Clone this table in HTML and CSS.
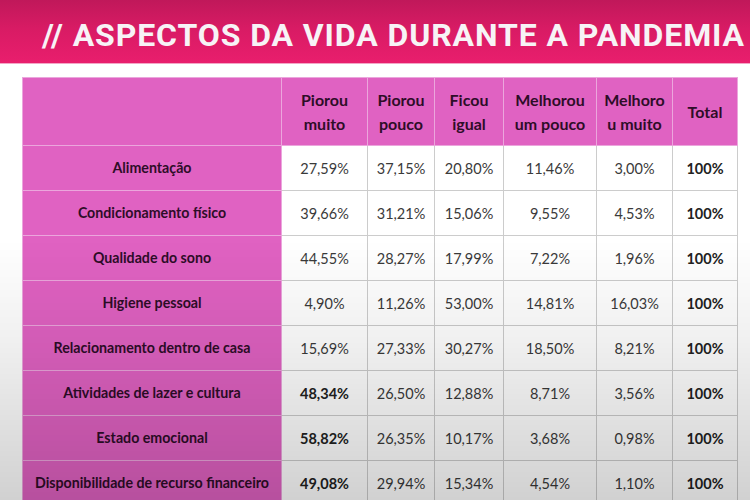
FILE: index.html
```html
<!DOCTYPE html>
<html lang="pt">
<head>
<meta charset="utf-8">
<link rel="stylesheet" href="styles.css">
</head>
<body>
<header class="topbar">
  <h1 class="title">// ASPECTOS DA VIDA DURANTE A PANDEMIA</h1>
</header>
<main class="content">
  <table class="grid">
    <colgroup>
      <col class="c-label"><col class="c1"><col class="c2"><col class="c3"><col class="c4"><col class="c5"><col class="c6">
    </colgroup>
    <thead>
      <tr>
        <th class="pink"></th>
        <th class="pink">Piorou<br>muito</th>
        <th class="pink">Piorou<br>pouco</th>
        <th class="pink">Ficou<br>igual</th>
        <th class="pink">Melhorou<br>um pouco</th>
        <th class="pink">Melhoro<br>u muito</th>
        <th class="pink">Total</th>
      </tr>
    </thead>
    <tbody>
      <tr><th class="pink">Alimentação</th><td>27,59%</td><td>37,15%</td><td>20,80%</td><td>11,46%</td><td>3,00%</td><td class="b">100%</td></tr>
      <tr><th class="pink">Condicionamento físico</th><td>39,66%</td><td>31,21%</td><td>15,06%</td><td>9,55%</td><td>4,53%</td><td class="b">100%</td></tr>
      <tr><th class="pink">Qualidade do sono</th><td>44,55%</td><td>28,27%</td><td>17,99%</td><td>7,22%</td><td>1,96%</td><td class="b">100%</td></tr>
      <tr><th class="pink">Higiene pessoal</th><td>4,90%</td><td>11,26%</td><td>53,00%</td><td>14,81%</td><td>16,03%</td><td class="b">100%</td></tr>
      <tr><th class="pink">Relacionamento dentro de casa</th><td>15,69%</td><td>27,33%</td><td>30,27%</td><td>18,50%</td><td>8,21%</td><td class="b">100%</td></tr>
      <tr><th class="pink">Atividades de lazer e cultura</th><td class="b">48,34%</td><td>26,50%</td><td>12,88%</td><td>8,71%</td><td>3,56%</td><td class="b">100%</td></tr>
      <tr><th class="pink">Estado emocional</th><td class="b">58,82%</td><td>26,35%</td><td>10,17%</td><td>3,68%</td><td>0,98%</td><td class="b">100%</td></tr>
      <tr><th class="pink">Disponibilidade de recurso financeiro</th><td class="b">49,08%</td><td>29,94%</td><td>15,34%</td><td>4,54%</td><td>1,10%</td><td class="b">100%</td></tr>
    </tbody>
  </table>
</main>
<div class="vignette"></div>
</body>
</html>
```
FILE: styles.css
```css
html, body {
  margin: 0;
  padding: 0;
  background: #ffffff;
  width: 750px;
  height: 500px;
  overflow: hidden;
}
body {
  font-family: Lato, "Open Sans", sans-serif;
}
.topbar {
  height: 64px;
  background: linear-gradient(to bottom, #c0185a 0%, #d81b64 45%, #e91e6d 100%);
  border-bottom: 1px solid #f3a6c6;
  display: flex;
  align-items: center;
  padding-left: 42px;
  box-sizing: border-box;
}
.title {
  margin: 0;
  padding-top: 6px;
  color: #f7f3f6;
  font-family: Roboto, "Liberation Sans", sans-serif;
  font-weight: 700;
  font-size: 32px;
  letter-spacing: 0.9px;
  white-space: nowrap;
}
.content {
  padding: 13px 0 0 22px;
}
.grid {
  border-collapse: collapse;
  width: 715px;
  table-layout: fixed;
  border: 1px solid #c9c9c9;
}
.c-label { width: 259px; }
.c1 { width: 86px; }
.c2 { width: 67px; }
.c3 { width: 69px; }
.c4 { width: 93px; }
.c5 { width: 76px; }
.c6 { width: 65px; }
.grid th, .grid td {
  text-align: center;
  vertical-align: middle;
  padding: 0;
}
.grid td {
  height: 44px;
  background: #ffffff;
  color: #3a3a3a;
  font-size: 14.5px;
  border: 1.5px solid #cccccc;
}
.grid td.b {
  font-weight: 700;
  color: #222222;
}
.grid th.pink {
  background: #e062c2;
  color: #2e0d28;
  font-weight: 700;
  font-size: 14.2px;
  line-height: 20px;
  border: 1.5px solid #eba6dc;
}
.grid thead th.pink {
  height: 67px;
  font-size: 16px;
  line-height: 24px;
}
.vignette {
  position: fixed;
  inset: 0;
  pointer-events: none;
  background:
    linear-gradient(to bottom, rgba(0,0,0,0) 0%, rgba(0,0,0,0) 48%, rgba(0,0,0,0.06) 68%, rgba(0,0,0,0.18) 100%);
}
```
